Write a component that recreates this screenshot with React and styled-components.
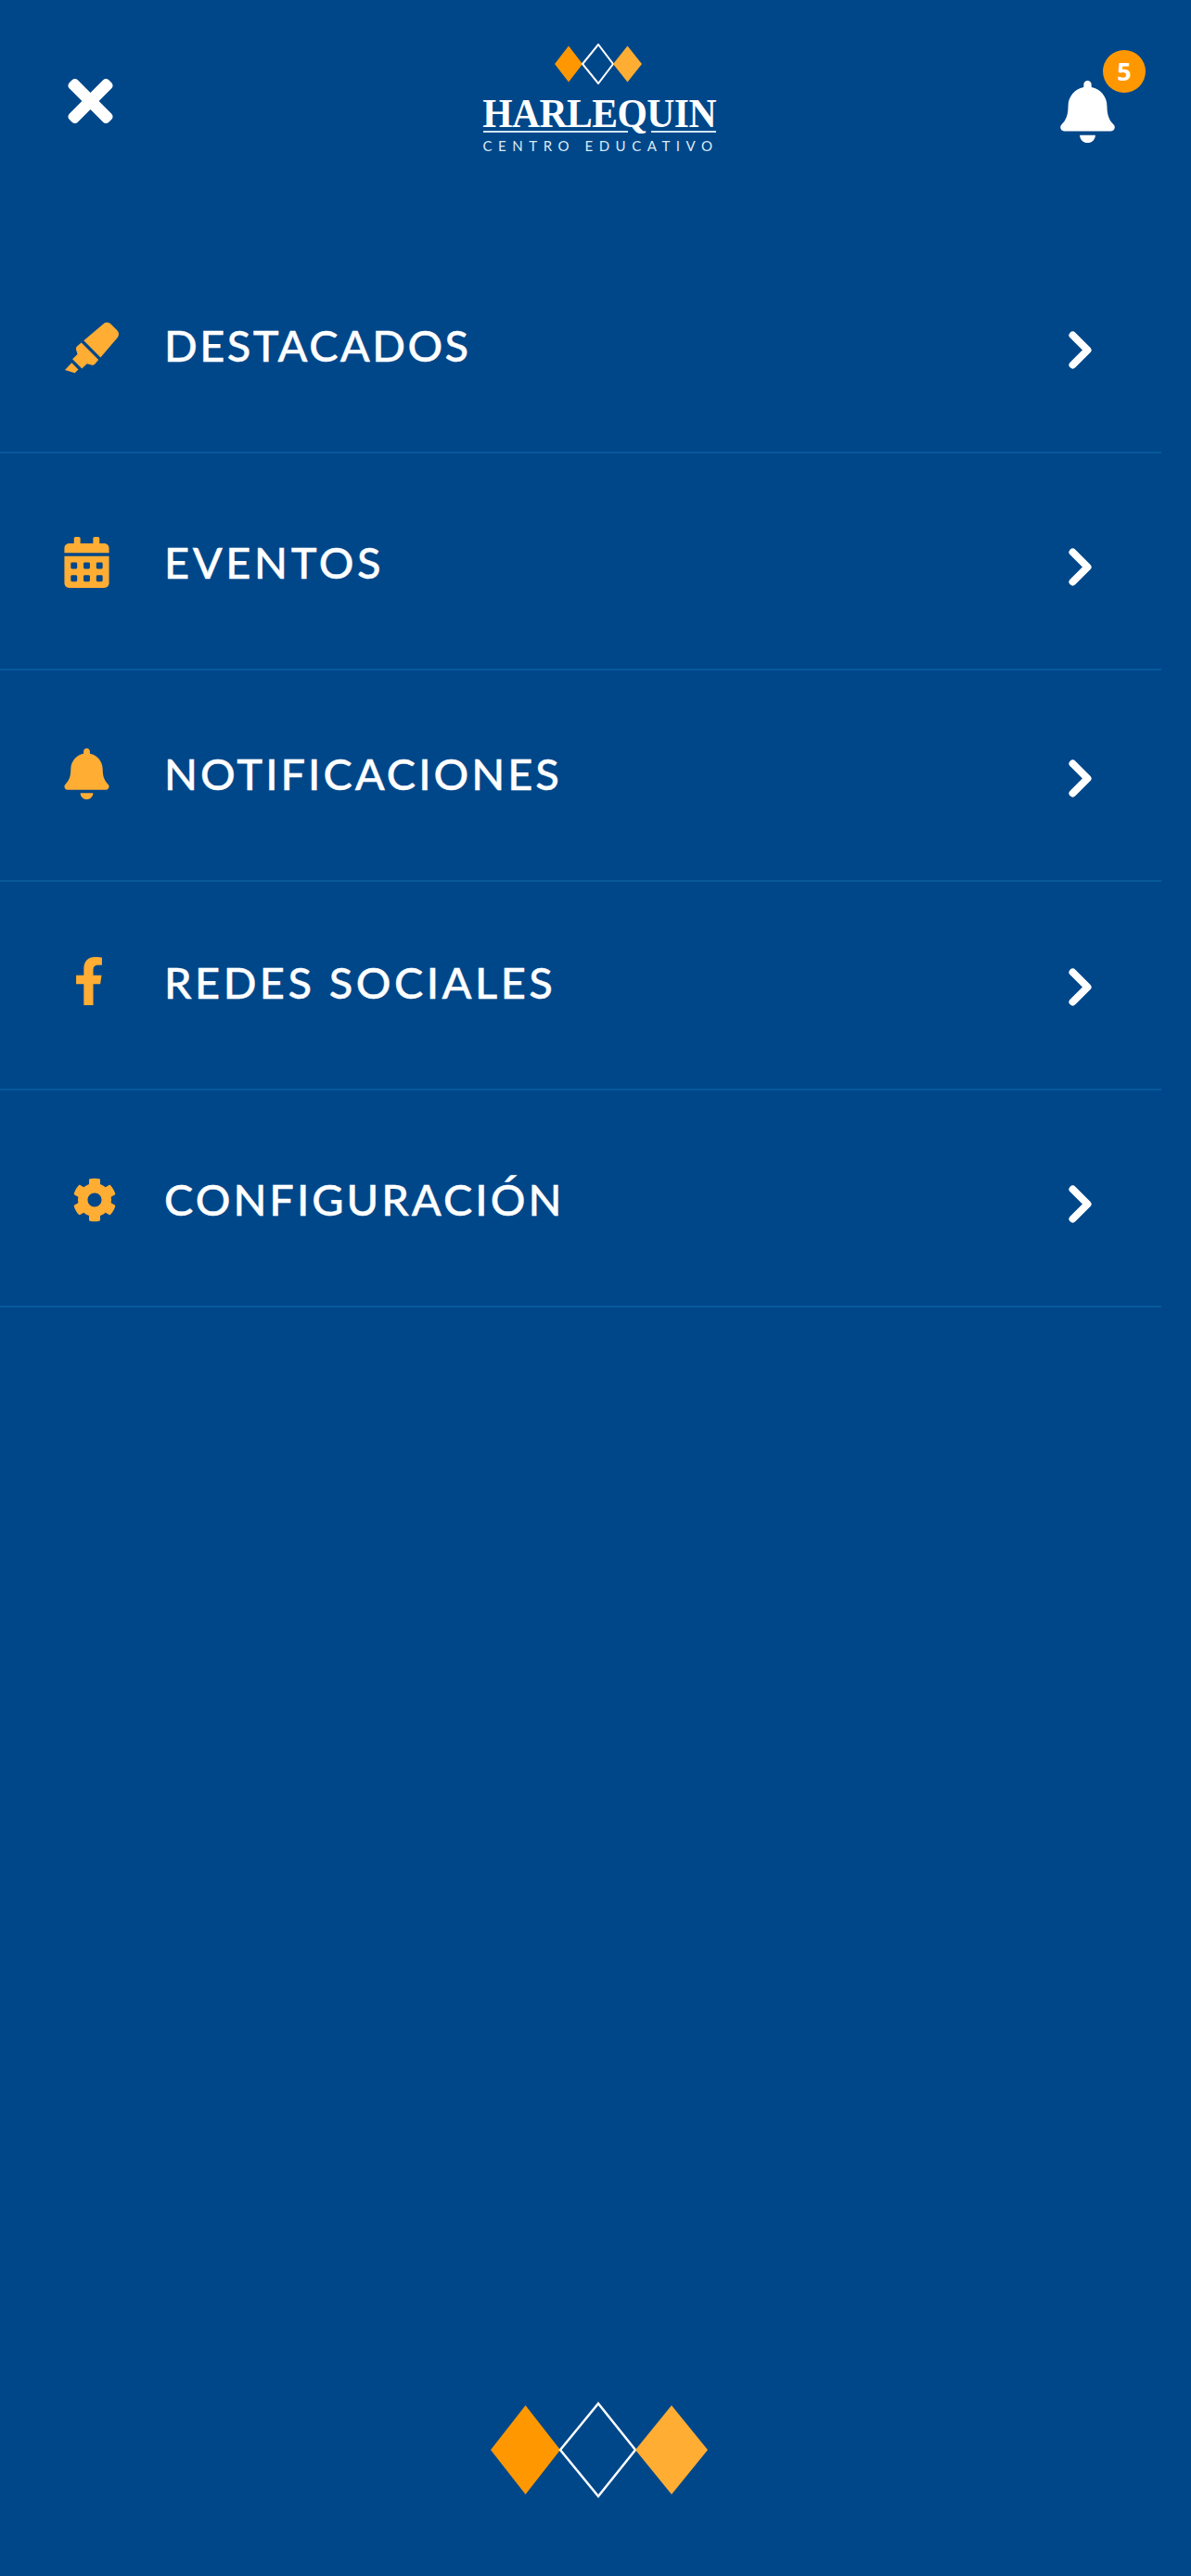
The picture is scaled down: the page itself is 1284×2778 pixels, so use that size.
import React from "react"
import styled, { createGlobalStyle } from "styled-components"
import { FaTimes, FaBell, FaHighlighter, FaCalendarAlt, FaFacebookF, FaCog } from "react-icons/fa"

const GlobalStyle = createGlobalStyle`
  html, body {
    margin: 0;
    padding: 0;
    background: #00478a;
  }
`

const Page = styled.div`
  width: 1284px;
  height: 2778px;
  display: flex;
  flex-direction: column;
  background: #00478a;
  overflow: hidden;
`

const Header = styled.header`
  height: 240px;
  box-sizing: border-box;
  padding: 47px 78px 0 72px;
  display: flex;
  justify-content: space-between;
  align-items: flex-start;
`

const CloseButton = styled.div`
  margin-top: 27px;
  color: #fff;
  font-size: 70px;
  line-height: 0;
  width: 51px;
  height: 70px;
  display: flex;
  justify-content: center;
  align-items: center;
`

const Logo = styled.div`
  width: 251px;
  margin-left: 31px;
  display: flex;
  flex-direction: column;
  align-items: center;
`

const LogoName = styled.div`
  margin-top: 13px;
  font-family: "Liberation Serif", serif;
  font-weight: 700;
  font-size: 45px;
  line-height: 36px;
  letter-spacing: -0.6px;
  transform: scaleX(0.925);
  color: #fff;
  white-space: nowrap;
`

const LogoRule = styled.div`
  width: 100%;
  margin-top: 1px;
  display: flex;
  justify-content: space-between;
`

const RulePiece = styled.span`
  display: block;
  width: ${(p) => p.$width}px;
  height: 2px;
  background: #cfe6f5;
`

const LogoSub = styled.div`
  margin-top: 7px;
  font-family: Lato, sans-serif;
  font-size: 15px;
  line-height: 14px;
  letter-spacing: 6.55px;
  margin-right: -2px;
  color: #dcebf6;
  white-space: nowrap;
`

const BellButton = styled.div`
  position: relative;
  margin-top: 40px;
  width: 67px;
  height: 67px;
  color: #fff;
  font-size: 67px;
  line-height: 0;
`

const Badge = styled.span`
  position: absolute;
  top: -33px;
  left: 50px;
  width: 46px;
  height: 46px;
  border-radius: 50%;
  background: #ff9800;
  color: #fff;
  font-family: "Open Sans", sans-serif;
  font-weight: 700;
  font-size: 27px;
  line-height: 46px;
  text-align: center;
`

const Menu = styled.nav`
  display: flex;
  flex-direction: column;
  width: 1252px;
`

const Row = styled.div`
  display: flex;
  align-items: center;
  height: 48px;
  padding: ${(p) => p.$top}px 75px 91px 0;
  border-bottom: 2px solid #07599a;
`

const IconSlot = styled.div`
  box-sizing: border-box;
  width: 177px;
  flex-shrink: 0;
  padding-left: ${(p) => p.$left}px;
  margin-top: ${(p) => p.$shift || 0}px;
  color: #ffad33;
  font-size: ${(p) => p.$size}px;
  line-height: 0;
  display: flex;
  align-items: center;
`

const Label = styled.span`
  flex: 1;
  font-family: Lato, sans-serif;
  font-weight: 500;
  font-size: 47px;
  line-height: 48px;
  letter-spacing: ${(p) => p.$spacing}px;
  -webkit-text-stroke: 0.4px #fff;
  color: #fff;
  white-space: nowrap;
`

const Chevron = styled.svg`
  width: 25px;
  height: 41px;
  margin-top: 10px;
  flex-shrink: 0;
`

const Footer = styled.footer`
  margin-top: auto;
  padding: 0 0 84px 4px;
  display: flex;
  justify-content: center;
`

const Diamonds = styled.svg`
  display: block;
  margin-right: ${(p) => p.$nudge || 0}px;
`

const LogoDiamonds = () => (
  <Diamonds width="94" height="44" viewBox="0 0 94 44" $nudge={3}>
    <polygon points="0,22 15,2.5 30,22 15,41.5" fill="#ff9800" />
    <polygon points="30,22 47,1 63,22 47,43" fill="none" stroke="#fff" strokeWidth="2" />
    <polygon points="63,22 78.5,2.5 94,22 78.5,41.5" fill="#ffad33" />
  </Diamonds>
)

const ChevronIcon = () => (
  <Chevron viewBox="0 0 25 41">
    <polyline
      points="4.5,4.5 20.5,20.5 4.5,36.5"
      fill="none"
      stroke="#fff"
      strokeWidth="8"
      strokeLinecap="round"
      strokeLinejoin="round"
    />
  </Chevron>
)

const items = [
  { label: "DESTACADOS", top: 108, spacing: 2.4, Icon: FaHighlighter, left: 70, size: 58, shift: 6 },
  { label: "EVENTOS", top: 93, spacing: 3.6, Icon: FaCalendarAlt, left: 66, size: 55 },
  { label: "NOTIFICACIONES", top: 87, spacing: 3, Icon: FaBell, left: 66, size: 55 },
  { label: "REDES SOCIALES", top: 84, spacing: 3.45, Icon: FaFacebookF, left: 70, size: 52, shift: -2 },
  { label: "CONFIGURACIÓN", top: 93, spacing: 3, Icon: FaCog, left: 78, size: 48, shift: 2 },
]

export default function App() {
  return (
    <Page>
      <GlobalStyle />
      <Header>
        <CloseButton>
          <FaTimes />
        </CloseButton>
        <Logo>
          <LogoDiamonds />
          <LogoName>HARLEQUIN</LogoName>
          <LogoRule>
            <RulePiece $width={156} />
            <RulePiece $width={70} />
          </LogoRule>
          <LogoSub>CENTRO EDUCATIVO</LogoSub>
        </Logo>
        <BellButton>
          <FaBell />
          <Badge>5</Badge>
        </BellButton>
      </Header>
      <Menu>
        {items.map(({ label, top, spacing, Icon, left, size, shift }) => (
          <Row key={label} $top={top}>
            <IconSlot $left={left} $size={size} $shift={shift}>
              <Icon />
            </IconSlot>
            <Label $spacing={spacing}>{label}</Label>
            <ChevronIcon />
          </Row>
        ))}
      </Menu>
      <Footer>
        <Diamonds width="240" height="104" viewBox="0 0 240 104">
          <polygon points="5,52 42.5,4 80,52 42.5,100" fill="#ff9800" />
          <polygon points="80,52 121,2 161,52 121,102" fill="none" stroke="#fff" strokeWidth="2.5" />
          <polygon points="161,52 200,4 239,52 200,100" fill="#ffad33" />
        </Diamonds>
      </Footer>
    </Page>
  )
}
